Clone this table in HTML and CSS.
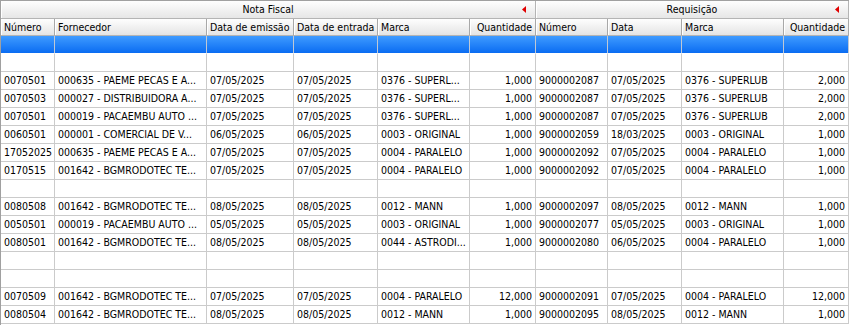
FILE: index.html
```html
<!DOCTYPE html>
<html lang="pt-BR">
<head>
<meta charset="utf-8">
<title>Grid</title>
<link rel="stylesheet" href="styles.css">
</head>
<body>
<div class="table">
  <div class="row groups">
    <div class="gh"><span></span><span class="gt">Nota Fiscal</span><span class="mk"><svg width="4" height="7" viewBox="0 0 4 7"><polygon points="4,0 4,7 0,3.5" fill="#e00000"/></svg></span></div>
    <div class="gh"><span></span><span class="gt">Requisição</span><span class="mk"><svg width="4" height="7" viewBox="0 0 4 7"><polygon points="4,0 4,7 0,3.5" fill="#e00000"/></svg></span></div>
  </div>
  <div class="row heads">
    <div class="ch">Número</div><div class="ch">Fornecedor</div><div class="ch">Data de emissão</div><div class="ch">Data de entrada</div><div class="ch">Marca</div><div class="ch r">Quantidade</div><div class="ch">Número</div><div class="ch">Data</div><div class="ch">Marca</div><div class="ch r">Quantidade</div>
  </div>
  <div class="row sel"><div class="c"></div><div class="c"></div><div class="c"></div><div class="c"></div><div class="c"></div><div class="c"></div><div class="c"></div><div class="c"></div><div class="c"></div><div class="c"></div></div>
  <div class="row"><div class="c"></div><div class="c"></div><div class="c"></div><div class="c"></div><div class="c"></div><div class="c"></div><div class="c"></div><div class="c"></div><div class="c"></div><div class="c"></div></div>
  <div class="row"><div class="c">0070501</div><div class="c">000635 - PAEME PECAS E A...</div><div class="c">07/05/2025</div><div class="c">07/05/2025</div><div class="c">0376 - SUPERL...</div><div class="c r">1,000</div><div class="c">9000002087</div><div class="c">07/05/2025</div><div class="c">0376 - SUPERLUB</div><div class="c r">2,000</div></div>
  <div class="row"><div class="c">0070503</div><div class="c">000027 - DISTRIBUIDORA A...</div><div class="c">07/05/2025</div><div class="c">07/05/2025</div><div class="c">0376 - SUPERL...</div><div class="c r">1,000</div><div class="c">9000002087</div><div class="c">07/05/2025</div><div class="c">0376 - SUPERLUB</div><div class="c r">2,000</div></div>
  <div class="row"><div class="c">0070501</div><div class="c">000019 - PACAEMBU AUTO ...</div><div class="c">07/05/2025</div><div class="c">07/05/2025</div><div class="c">0376 - SUPERL...</div><div class="c r">1,000</div><div class="c">9000002087</div><div class="c">07/05/2025</div><div class="c">0376 - SUPERLUB</div><div class="c r">2,000</div></div>
  <div class="row"><div class="c">0060501</div><div class="c">000001 - COMERCIAL DE V...</div><div class="c">06/05/2025</div><div class="c">06/05/2025</div><div class="c">0003 - ORIGINAL</div><div class="c r">1,000</div><div class="c">9000002059</div><div class="c">18/03/2025</div><div class="c">0003 - ORIGINAL</div><div class="c r">1,000</div></div>
  <div class="row"><div class="c">17052025</div><div class="c">000635 - PAEME PECAS E A...</div><div class="c">07/05/2025</div><div class="c">07/05/2025</div><div class="c">0004 - PARALELO</div><div class="c r">1,000</div><div class="c">9000002092</div><div class="c">07/05/2025</div><div class="c">0004 - PARALELO</div><div class="c r">1,000</div></div>
  <div class="row"><div class="c">0170515</div><div class="c">001642 - BGMRODOTEC TE...</div><div class="c">07/05/2025</div><div class="c">07/05/2025</div><div class="c">0004 - PARALELO</div><div class="c r">1,000</div><div class="c">9000002092</div><div class="c">07/05/2025</div><div class="c">0004 - PARALELO</div><div class="c r">1,000</div></div>
  <div class="row"><div class="c"></div><div class="c"></div><div class="c"></div><div class="c"></div><div class="c"></div><div class="c"></div><div class="c"></div><div class="c"></div><div class="c"></div><div class="c"></div></div>
  <div class="row"><div class="c">0080508</div><div class="c">001642 - BGMRODOTEC TE...</div><div class="c">08/05/2025</div><div class="c">08/05/2025</div><div class="c">0012 - MANN</div><div class="c r">1,000</div><div class="c">9000002097</div><div class="c">08/05/2025</div><div class="c">0012 - MANN</div><div class="c r">1,000</div></div>
  <div class="row"><div class="c">0050501</div><div class="c">000019 - PACAEMBU AUTO ...</div><div class="c">05/05/2025</div><div class="c">05/05/2025</div><div class="c">0003 - ORIGINAL</div><div class="c r">1,000</div><div class="c">9000002077</div><div class="c">05/05/2025</div><div class="c">0003 - ORIGINAL</div><div class="c r">1,000</div></div>
  <div class="row"><div class="c">0080501</div><div class="c">001642 - BGMRODOTEC TE...</div><div class="c">08/05/2025</div><div class="c">08/05/2025</div><div class="c">0044 - ASTRODI...</div><div class="c r">1,000</div><div class="c">9000002080</div><div class="c">06/05/2025</div><div class="c">0004 - PARALELO</div><div class="c r">1,000</div></div>
  <div class="row"><div class="c"></div><div class="c"></div><div class="c"></div><div class="c"></div><div class="c"></div><div class="c"></div><div class="c"></div><div class="c"></div><div class="c"></div><div class="c"></div></div>
  <div class="row"><div class="c"></div><div class="c"></div><div class="c"></div><div class="c"></div><div class="c"></div><div class="c"></div><div class="c"></div><div class="c"></div><div class="c"></div><div class="c"></div></div>
  <div class="row"><div class="c">0070509</div><div class="c">001642 - BGMRODOTEC TE...</div><div class="c">07/05/2025</div><div class="c">07/05/2025</div><div class="c">0004 - PARALELO</div><div class="c r">12,000</div><div class="c">9000002091</div><div class="c">07/05/2025</div><div class="c">0004 - PARALELO</div><div class="c r">12,000</div></div>
  <div class="row"><div class="c">0080504</div><div class="c">001642 - BGMRODOTEC TE...</div><div class="c">08/05/2025</div><div class="c">08/05/2025</div><div class="c">0012 - MANN</div><div class="c r">1,000</div><div class="c">9000002095</div><div class="c">08/05/2025</div><div class="c">0012 - MANN</div><div class="c r">1,000</div></div>
</div>
</body>
</html>
```
FILE: styles.css
```css
html, body {
  margin: 0;
  padding: 0;
  background: #ffffff;
}
body {
  font-family: "DejaVu Sans Condensed", "Liberation Sans", sans-serif;
  font-size: 10.5px;
  color: #000000;
}
.table {
  width: 849px;
  height: 325px;
  box-sizing: border-box;
  border-top: 1px solid #a0a0a0;
  border-left: 1px solid #a0a0a0;
  overflow: hidden;
  background: #ffffff;
}
.row {
  display: grid;
  grid-template-columns: 54px 152px 87px 84px 92px 66px 72px 74px 102px 65px;
}
.row.groups {
  grid-template-columns: 535px 313px;
}
.gh {
  height: 17px;
  border-right: 1px solid #b4b4b4;
  border-bottom: 1px solid #b4b4b4;
  display: grid;
  grid-template-columns: 1fr auto 1fr;
  align-items: center;
  background: linear-gradient(#fefefe, #e6e6e6);
  box-shadow: inset 1px 0 0 #ffffff;
  line-height: 17px;
}
.gt {
  white-space: nowrap;
}
.mk {
  display: flex;
  justify-content: flex-end;
  align-items: center;
  padding-right: 9px;
  height: 17px;
}
.mk svg { display: block; }
.ch {
  height: 16px;
  line-height: 16px;
  padding: 0 2px 0 3px;
  border-right: 1px solid #a8a8a8;
  border-bottom: 1px solid #b4b4b4;
  background: linear-gradient(#fefefe, #e4e4e4);
  box-shadow: inset 1px 0 0 #ffffff;
  white-space: nowrap;
  overflow: hidden;
}
.c {
  height: 17px;
  line-height: 17px;
  padding: 0 2px 0 3px;
  border-right: 1px solid #cbcbcb;
  border-bottom: 1px solid #cbcbcb;
  white-space: nowrap;
  overflow: hidden;
}
.r {
  text-align: right;
  padding-right: 3px;
}
.sel .c {
  background: linear-gradient(#3f9bff, #0a6cf2);
  border-right-color: #c0c8d4;
  border-bottom-color: #ffffff;
}
```
